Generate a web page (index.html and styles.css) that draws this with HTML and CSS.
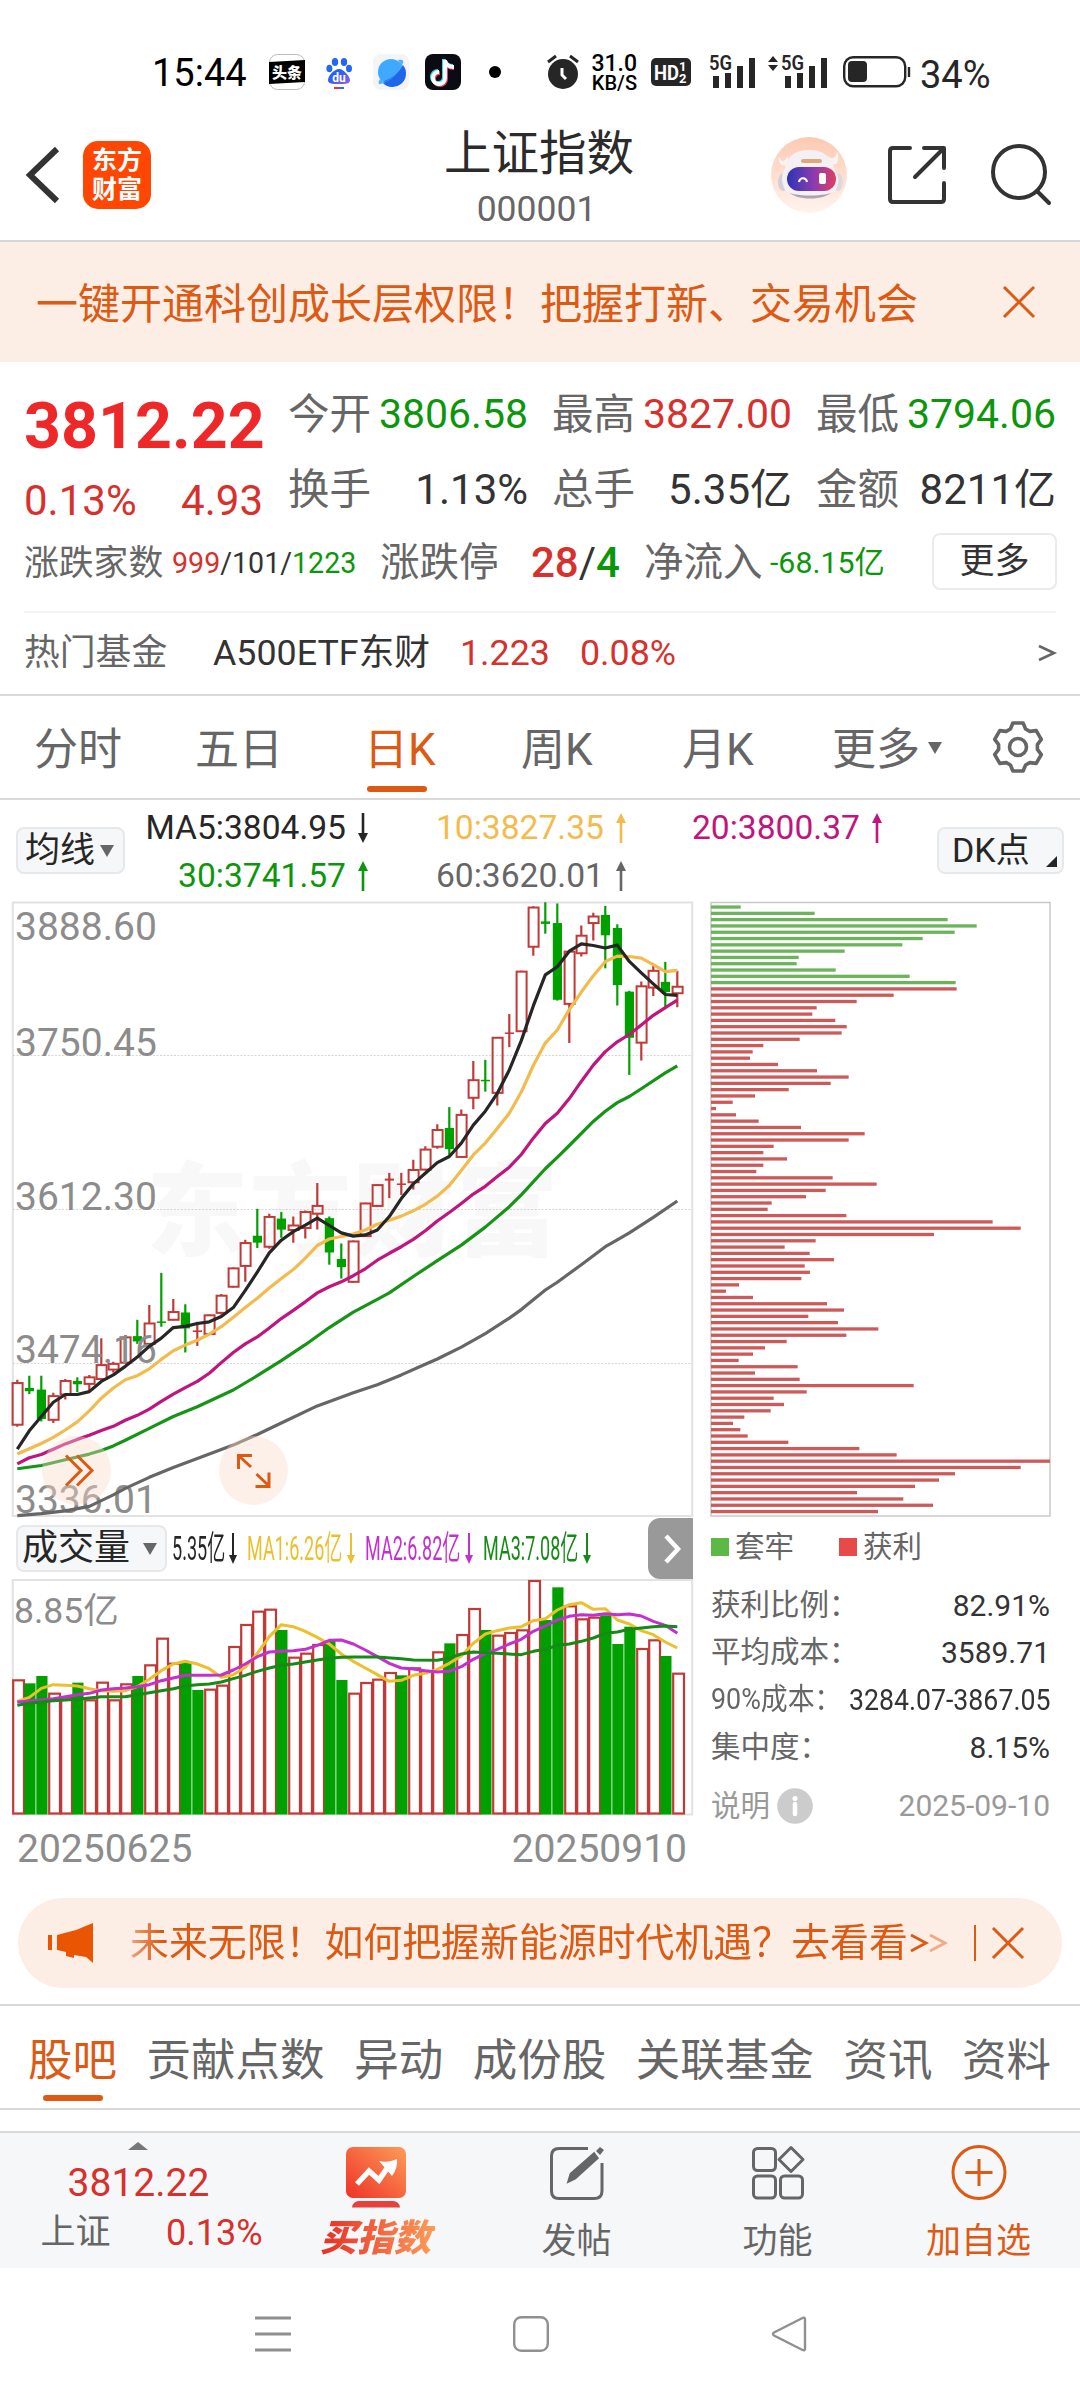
FILE: index.html
```html
<!DOCTYPE html>
<html lang="zh-CN">
<head>
    <meta charset="UTF-8">
    <meta name="viewport" content="width=device-width, initial-scale=1.0">
    <title>上证指数 000001</title>
    <link rel="stylesheet" href="styles.css">
</head>
<body>

    <div class="status">
        <span class="clock">15:44</span>
        <svg class="toutiao" width="36" height="36" viewBox="0 0 36 36">
            <rect x=".5" y=".5" width="35" height="35" rx="8" fill="#fff" stroke="#bbb"/>
            <path d="M0 8L36 6V28L0 30Z" fill="#000"/>
            <text x="18" y="23.5" text-anchor="middle" font-size="15" font-weight="900" fill="#fff">头条</text>
        </svg>
        <svg class="baidu" width="26" height="36" viewBox="0 0 26 36">
            <defs><linearGradient id="paw" x1="0" y1="0" x2="1" y2="1"><stop offset=".4" stop-color="#2a62f0"/><stop offset="1" stop-color="#a05be0"/></linearGradient></defs>
            <ellipse cx="9" cy="8" rx="3.2" ry="4" fill="#2468f2"/>
            <ellipse cx="18" cy="8" rx="3.2" ry="4" fill="#2468f2"/>
            <ellipse cx="3.4" cy="14.5" rx="3" ry="3.8" fill="#2468f2"/>
            <ellipse cx="23" cy="14.5" rx="3" ry="3.8" fill="#2468f2"/>
            <path d="M13 15C18 15 24 23 24 26C24 30 20 30 13 30C6 30 2 30 2 26C2 22 8 15 13 15Z" fill="url(#paw)"/>
            <text x="13" y="27.5" text-anchor="middle" font-size="12" font-weight="700" fill="#fff">du</text>
            <rect x="8" y="33" width="5" height="2" fill="#e33"/><rect x="13" y="33" width="5" height="2" fill="#36f"/>
        </svg>
        <svg class="planet" width="36" height="36" viewBox="0 0 36 36">
            <rect width="36" height="36" rx="8" fill="#f3f4f6"/>
            <circle cx="18" cy="18" r="13" fill="#3fa9ff"/>
            <path d="M30 11A13 13 0 0 1 9 28C18 25 26 19 30 11Z" fill="#1f66ea"/>
            <path d="M25 6C29 5 31 6 30 9C27 18 18 27 8 30C5 31 5 28 7 25L12 28C20 24 26 18 28 11Z" fill="#4db4ff"/>
        </svg>
        <svg class="tiktok" width="36" height="36" viewBox="0 0 36 36">
            <rect width="36" height="36" rx="8" fill="#0b0b14"/>
            <g fill="none" stroke-width="4">
                <path d="M19 5V23A6 6 0 1 1 13 17M19 6C20 10 23 12 28 12" stroke="#27e5e5"/>
                <path d="M21 7V25A6 6 0 1 1 15 19M21 8C22 12 25 14 29 14" stroke="#f23a5c"/>
                <path d="M20 6V24A6 6 0 1 1 14 18M20 7C21 11 24 13 29 13" stroke="#fff"/>
            </g>
        </svg>
        <span class="dot"></span>
        <svg class="alarm" width="32" height="36" viewBox="0 0 32 36">
            <circle cx="16" cy="20" r="15" fill="#262626"/>
            <path d="M1 8L9 2M23 2L31 8" stroke="#262626" stroke-width="3"/>
            <path d="M15 14V21L19 25" fill="none" stroke="#fff" stroke-width="3"/>
        </svg>
        <div class="speed"><b>31.0</b><span>KB/S</span></div>
        <svg class="hd" width="40" height="28" viewBox="0 0 40 28">
            <rect width="40" height="28" rx="5" fill="#262626"/>
            <text x="3" y="22" font-size="21" font-weight="700" fill="#fff" textLength="25" lengthAdjust="spacingAndGlyphs">HD</text>
            <text x="28" y="13" font-size="13" font-weight="700" fill="#fff">1</text>
            <text x="28" y="25" font-size="13" font-weight="700" fill="#fff">2</text>
        </svg>
        <svg class="signal" width="46" height="34" viewBox="0 0 46 34">
            <text x="-1" y="15" font-size="20" font-weight="600" fill="#262626" textLength="23" lengthAdjust="spacingAndGlyphs">5G</text>
            <path d="M6 21V33M18 18V33M30 11V33M42 3V33" stroke="#262626" stroke-width="6"/>
        </svg>
        <svg class="signal second" width="60" height="34" viewBox="0 0 60 34">
            <path d="M0 7L5 1L10 7ZM0 10L5 16L10 10Z" fill="#262626"/>
            <text x="13" y="15" font-size="20" font-weight="600" fill="#262626" textLength="23" lengthAdjust="spacingAndGlyphs">5G</text>
            <path d="M20 21V33M32 18V33M44 11V33M56 3V33" stroke="#262626" stroke-width="6"/>
        </svg>
        <svg class="battery" width="68" height="32" viewBox="0 0 68 32">
            <rect x="1.2" y="1.2" width="61" height="29" rx="9" fill="none" stroke="#262626" stroke-width="2.4"/>
            <rect x="5" y="5" width="19" height="21" rx="4" fill="#262626"/>
            <path d="M66 11V21" stroke="#262626" stroke-width="2.4"/>
        </svg>
        <span class="percent">34%</span>
    </div>

    <div class="header">
        <svg class="back" width="34" height="58" viewBox="0 0 34 58"><path d="M31 3L4 29L31 55" fill="none" stroke="#333" stroke-width="6"/></svg>
        <div class="brand"><span>东方</span><span>财富</span></div>
        <div class="title"><h1>上证指数</h1><p>000001</p></div>
        <svg class="robot" width="76" height="76" viewBox="0 0 76 76">
            <defs>
                <linearGradient id="halo" x1="0" y1="0" x2="0" y2="1"><stop offset="0" stop-color="#fdc9b2"/><stop offset="1" stop-color="#fff4ee"/></linearGradient>
                <linearGradient id="visor"><stop offset="0" stop-color="#2b35b4"/><stop offset=".55" stop-color="#8d3bb0"/><stop offset="1" stop-color="#e04060"/></linearGradient>
            </defs>
            <circle cx="38" cy="38" r="38" fill="url(#halo)"/>
            <path d="M8 19C10 26 14 25 17 19L17 29L11 28C8 26 7 22 8 19ZM66 15C64 23 60 22 57 19L59 28L65 27C68 24 68 18 66 15Z" fill="#f8f3f2"/>
            <ellipse cx="12" cy="45" rx="5" ry="9" fill="#d3cfd7"/><ellipse cx="67" cy="45" rx="5" ry="9" fill="#e0d8dd"/>
            <path d="M17 54C24 64 54 64 62 54Z" fill="#a9a5b3"/>
            <path d="M38 13C53 13 60 20 63 31C68 37 69 47 64 54C56 60 22 60 15 54C10 47 10 37 14 31C16 20 23 13 38 13Z" fill="#f4f0f3"/>
            <rect x="30" y="22" width="21" height="4" rx="2" fill="#dfa877"/>
            <rect x="16" y="30" width="49" height="24" rx="12" fill="url(#visor)"/>
            <path d="M28 45C29 40 35 40 36 45" fill="none" stroke="#fff" stroke-width="2.2"/>
            <rect x="48" y="36" width="7" height="11" rx="2" fill="#fff"/>
        </svg>
        <svg class="share" width="60" height="60" viewBox="0 0 60 60" fill="none" stroke="#333" stroke-width="4" stroke-linecap="round" stroke-linejoin="round">
            <path d="M23 3H6Q3 3 3 6V54Q3 57 6 57H54Q57 57 57 54V38M37 3H57V23M56 4L28 32"/>
        </svg>
        <svg class="search" width="62" height="62" viewBox="0 0 62 62" fill="none" stroke="#333" stroke-width="4" stroke-linecap="round">
            <circle cx="29" cy="28" r="26"/><path d="M47 47L59 59"/>
        </svg>
    </div>

    <div class="banner">
        <span>一键开通科创成长层权限！把握打新、交易机会</span>
        <svg width="34" height="34" viewBox="0 0 34 34"><path d="M2 2L32 32M32 2L2 32" stroke="#dc5a14" stroke-width="3"/></svg>
    </div>

    <div class="quote">
        <div class="price">
            <strong>3812.22</strong>
            <div class="change"><span>0.13%</span><span>4.93</span></div>
        </div>
        <div class="stats">
            <div class="stat"><label>今开</label><span class="down">3806.58</span></div>
            <div class="stat"><label>最高</label><span class="up">3827.00</span></div>
            <div class="stat"><label>最低</label><span class="down">3794.06</span></div>
            <div class="stat"><label>换手</label><span>1.13%</span></div>
            <div class="stat"><label>总手</label><span>5.35亿</span></div>
            <div class="stat"><label>金额</label><span>8211亿</span></div>
        </div>
    </div>
    <div class="breadth">
        <label class="families">涨跌家数</label>
        <span class="counts"><i class="up">999</i>/101/<i class="down">1223</i></span>
        <label>涨跌停</label>
        <span class="limits"><i class="up">28</i>/<i class="down">4</i></span>
        <label>净流入</label>
        <span class="inflow down">-68.15亿</span>
        <button class="more">更多</button>
    </div>
    <div class="fund">
        <label>热门基金</label>
        <span class="fund-name">A500ETF东财</span>
        <span class="fund-price up">1.223</span>
        <span class="fund-rate up">0.08%</span>
        <svg width="20" height="18" viewBox="0 0 20 18"><path d="M2 2L17 9L2 16" fill="none" stroke="#666" stroke-width="2.6"/></svg>
    </div>

    <div class="periods">
        <span>分时</span>
        <span>五日</span>
        <span class="active">日K</span>
        <span>周K</span>
        <span>月K</span>
        <span>更多<i class="caret"></i></span>
        <svg class="gear" width="54" height="54" viewBox="-27 -27 54 54" fill="none" stroke="#666" stroke-width="3.6" stroke-linejoin="round">
            <path d="M-7.6-18L-5.1-24H5.1L7.6-18L11.8-15.6L18.2-16.4L23.3-7.6L19.4-2.4V2.4L23.3 7.6L18.2 16.4L11.8 15.6L7.6 18L5.1 24H-5.1L-7.6 18L-11.8 15.6L-18.2 16.4L-23.3 7.6L-19.4 2.4V-2.4L-23.3-7.6L-18.2-16.4L-11.8-15.6Z"/>
            <circle r="8.5"/>
        </svg>
    </div>

    <div class="averages">
        <div class="chip ma-chip">均线<i class="caret"></i></div>
        <div class="ma-list">
            <span class="ma5">MA5:3804.95<svg width="10" height="30" viewBox="0 0 10 30"><path d="M5 0V26" stroke="currentColor" stroke-width="2.6"/><path d="M0 20L5 30L10 20Z" fill="currentColor"/></svg></span>
            <span class="ma10">10:3827.35<svg width="10" height="30" viewBox="0 0 10 30"><path d="M5 4V30" stroke="currentColor" stroke-width="2.6"/><path d="M0 10L5 0L10 10Z" fill="currentColor"/></svg></span>
            <span class="ma20">20:3800.37<svg width="10" height="30" viewBox="0 0 10 30"><path d="M5 4V30" stroke="currentColor" stroke-width="2.6"/><path d="M0 10L5 0L10 10Z" fill="currentColor"/></svg></span>
            <span class="ma30">30:3741.57<svg width="10" height="30" viewBox="0 0 10 30"><path d="M5 4V30" stroke="currentColor" stroke-width="2.6"/><path d="M0 10L5 0L10 10Z" fill="currentColor"/></svg></span>
            <span class="ma60">60:3620.01<svg width="10" height="30" viewBox="0 0 10 30"><path d="M5 4V30" stroke="currentColor" stroke-width="2.6"/><path d="M0 10L5 0L10 10Z" fill="currentColor"/></svg></span>
        </div>
        <div class="chip dk-chip">DK点<i class="corner"></i></div>
    </div>

    <div class="charts">
        <div class="chart-left">
            <svg id="kline" width="681" height="617" viewBox="0 0 681 617">
                <text class="watermark" x="134" y="347" textLength="412">东方财富</text>
                <rect x=".8" y="1.5" width="679.4" height="613.5" fill="none" stroke="#e2e2e2" stroke-width="2"/>
                <path d="M1 154.5H680M1 308.5H680M1 462.5H680" stroke="#d6d6d6" stroke-dasharray="2 1.5"/>
                <g id="candles"></g>
                <g class="axis">
                    <text x="3" y="39">3888.60</text>
                    <text x="3" y="154.5">3750.45</text>
                    <text x="3" y="308.5">3612.30</text>
                    <text x="3" y="462">3474.16</text>
                    <text x="3" y="611.5">3336.01</text>
                </g>
                <g id="klines"></g>
                <g fill="#fbd9c8" fill-opacity=".4"><circle cx="64.5" cy="569.5" r="34.5"/><circle cx="241.5" cy="569.5" r="34.5"/></g>
                <g fill="none" stroke="#dc5a14" stroke-width="3">
                    <path d="M54 554.5L69 569.5L54 584.5M65 554.5L80 569.5L65 584.5"/>
                    <path d="M226.5 568V554.5H240M227 555L239 566M244.5 573L256.5 584.5M243.5 585.5H257V571.5"/>
                </g>
            </svg>
            <div class="vol-head">
                <div class="chip vol-chip">成交量<i class="caret"></i></div>
                <div class="vol-list">
                    <div class="vol-now"><span>5.35亿</span><svg width="8" height="31" viewBox="0 0 8 31" fill="currentColor"><path d="M3 0H5V22H8L4 31L0 22H3Z"/></svg></div>
                    <div class="vol-ma1"><span>MA1:6.26亿</span><svg width="8" height="31" viewBox="0 0 8 31" fill="currentColor"><path d="M3 0H5V22H8L4 31L0 22H3Z"/></svg></div>
                    <div class="vol-ma2"><span>MA2:6.82亿</span><svg width="8" height="31" viewBox="0 0 8 31" fill="currentColor"><path d="M3 0H5V22H8L4 31L0 22H3Z"/></svg></div>
                    <div class="vol-ma3"><span>MA3:7.08亿</span><svg width="8" height="31" viewBox="0 0 8 31" fill="currentColor"><path d="M3 0H5V22H8L4 31L0 22H3Z"/></svg></div>
                </div>
                <div class="vol-next"><svg width="18" height="30" viewBox="0 0 18 30"><path d="M3 2L15 15L3 28" fill="none" stroke="#fff" stroke-width="4.5"/></svg></div>
            </div>
            <svg id="volume" width="681" height="237" viewBox="0 0 681 237">
                <rect x=".8" y="1" width="679.4" height="234.5" fill="none" stroke="#e2e2e2" stroke-width="2"/>
                <text class="vol-max" x="2" y="44">8.85亿</text>
                <g id="volbars"></g>
                <g id="vollines"></g>
            </svg>
            <div class="dates"><span>20250625</span><span>20250910</span></div>
        </div>
        <div class="chart-right">
            <svg id="profile" width="342" height="617" viewBox="0 0 342 617">
                <rect x="1" y="1.5" width="339" height="613.5" fill="none" stroke="#c9c9c9" stroke-width="1.5"/>
            </svg>
            <div class="legend"><i class="sq green"></i><span>套牢</span><i class="sq red"></i><span>获利</span></div>
            <div class="cost"><label>获利比例：</label><span>82.91%</span></div>
            <div class="cost"><label>平均成本：</label><span>3589.71</span></div>
            <div class="cost tight"><label>90%成本：</label><span>3284.07-3867.05</span></div>
            <div class="cost"><label>集中度：</label><span>8.15%</span></div>
            <div class="explain">
                <span>说明</span>
                <svg width="36" height="36" viewBox="0 0 36 36"><circle cx="18" cy="18" r="17.8" fill="#ccc"/><circle cx="18" cy="10.5" r="2.5" fill="#fff"/><path d="M18 16V26" stroke="#fff" stroke-width="4.5" stroke-linecap="round"/></svg>
                <span class="date">2025-09-10</span>
            </div>
        </div>
    </div>

    <div class="promo">
        <svg width="46" height="40" viewBox="0 0 46 40" fill="#ea5504"><path d="M0 12H4V27H0ZM9 12L28 7L45 0V40L38 34L26 32V35L18 33V29L9 27Z"/></svg>
        <span class="promo-text">未来无限！如何把握新能源时代机遇？去看看</span>
        <svg width="40" height="20" viewBox="0 0 40 20" fill="none" stroke="#dc5a14" stroke-width="2.8"><path d="M2 2L17 10L2 18"/><path d="M21 2L36 10L21 18" stroke-opacity=".45"/></svg>
        <i class="bar"></i>
        <svg width="34" height="34" viewBox="0 0 34 34"><path d="M2 2L32 32M32 2L2 32" stroke="#dc5a14" stroke-width="3"/></svg>
    </div>

    <div class="sections">
        <span class="active">股吧</span>
        <span>贡献点数</span>
        <span>异动</span>
        <span>成份股</span>
        <span>关联基金</span>
        <span>资讯</span>
        <span>资料</span>
    </div>

    <div class="toolbar">
        <div class="index">
            <i class="arrow-up"></i>
            <span class="up index-price">3812.22</span>
            <div class="index-line"><span>上证</span><span class="up">0.13%</span></div>
        </div>
        <div class="tool buy">
            <svg width="62" height="62" viewBox="0 0 62 62">
                <defs><linearGradient id="hot" x1="0" y1="1" x2="1" y2="0"><stop offset="0" stop-color="#ef3126"/><stop offset="1" stop-color="#fd9c59"/></linearGradient></defs>
                <rect x="1" y="1" width="60" height="51" rx="7" fill="url(#hot)"/>
                <path d="M7 61.5Q8 55 14 55H48Q54 55 55 61.5Z" fill="#e8403a"/>
                <path d="M12 38L24 25L34 34L45 18" fill="none" stroke="#fff" stroke-width="5.5"/><path d="M34 15Q44 17 52 13Q53 22 47 30Z" fill="#fff"/>
            </svg>
            <span>买指数</span>
        </div>
        <div class="tool">
            <svg width="62" height="62" viewBox="0 0 62 62" fill="none" stroke="#666" stroke-width="3"><path d="M42 2.5H13Q5.5 2.5 5.5 10V45Q5.5 52.5 13 52.5H48Q56 52.5 56 45V17"/><path d="M23 35L25 28L48 8L51 12L29 32Z" fill="#666"/><path d="M50 5L54 1L58 4L54 9Z" fill="#666" stroke="none"/></svg>
            <span>发帖</span>
        </div>
        <div class="tool">
            <svg width="62" height="62" viewBox="0 0 62 62" fill="none" stroke="#666" stroke-width="3"><rect x="6.5" y="2.5" width="22" height="22" rx="4"/><path d="M44 1.5L56 13.5L44 25.5L32 13.5Z" stroke-linejoin="round"/><rect x="6.5" y="30" width="22" height="22" rx="4"/><rect x="33.5" y="30" width="22" height="22" rx="4"/></svg>
            <span>功能</span>
        </div>
        <div class="tool add">
            <svg width="62" height="62" viewBox="0 0 62 62" fill="none" stroke="#dc5a14" stroke-width="3"><circle cx="31" cy="26.5" r="26"/><path d="M31 13V40M17.5 26.5H44.5"/></svg>
            <span>加自选</span>
        </div>
    </div>

    <div class="sysnav">
        <svg width="36" height="36" viewBox="0 0 36 36"><path d="M0 2H36M0 18H36M0 34H36" stroke="#909090" stroke-width="3"/></svg>
        <svg width="36" height="36" viewBox="0 0 36 36"><rect x="1.2" y="1.2" width="33.6" height="33.6" rx="7" fill="none" stroke="#909090" stroke-width="2.4"/></svg>
        <svg width="36" height="36" viewBox="0 0 36 36"><path d="M31.5 2L3 16.5Q1 18 3 19.5L31.5 34Q34 35 34 32.5V3.5Q34 1 31.5 2Z" fill="none" stroke="#909090" stroke-width="2.4"/></svg>
    </div>

    <script src="chart.js"></script>
</body>
</html>
```

FILE: styles.css
```css
* {
    box-sizing: border-box;
}

body {
    margin: 0;
    width: 1080px;
    background: #fff;
    color: #333;
    font-family: Roboto, "Noto Sans CJK SC", sans-serif;
    white-space: nowrap;
}

i {
    font-style: normal;
}

svg {
    display: block;
    flex: none;
    overflow: visible;
}

.up {
    color: #d7312e;
}

.down {
    color: #0c960c;
}

.caret {
    display: inline-block;
    border: 7.5px solid transparent;
    border-top: 12px solid #666;
    border-bottom: 0;
}

/* status bar */
.status {
    display: flex;
    align-items: center;
    height: 110px;
    padding: 34px 0 0 152px;
    color: #000;
}

.clock {
    width: 94px;
    margin-top: 2px;
    font-size: 38px;
    line-height: 40px;
}

.toutiao { margin-left: 23px; }
.baidu { margin-left: 21px; }
.planet { margin-left: 21px; }
.tiktok { margin-left: 16px; }

.dot {
    width: 12px;
    height: 12px;
    margin-left: 28px;
    border-radius: 50%;
    background: #000;
}

.alarm { margin-left: 46px; }

.speed {
    display: flex;
    flex-direction: column;
    align-items: flex-end;
    width: 47px;
    margin: 2px 0 0 11px;
    font-size: 20px;
    line-height: 18px;
    font-weight: 500;
}

.speed b {
    font-size: 23px;
    line-height: 20px;
    font-weight: 500;
}

.hd { margin-left: 14px; }
.signal { margin: 0 0 0 19px; }
.second { margin-left: 12px; }
.battery { margin-left: 15px; }

.percent {
    margin: 5px 0 0 9px;
    color: #262626;
    font-size: 38px;
    line-height: 40px;
}

/* header */
.header {
    display: flex;
    align-items: center;
    height: 132px;
    border-bottom: 2px solid #d6d6d6;
}

.back { margin-left: 26px; }

.brand {
    display: flex;
    flex-direction: column;
    align-items: center;
    justify-content: center;
    width: 68px;
    height: 68px;
    margin-left: 23px;
    border-radius: 15px;
    background: #ff4602;
    color: #fff;
    font-size: 25px;
    font-weight: 700;
    line-height: 29px;
}

.title {
    width: 240px;
    margin-left: 268px;
    padding-top: 9px;
    text-align: center;
}

.title h1 {
    margin: 0;
    color: #2b2b2b;
    font-size: 47.5px;
    font-weight: 400;
    line-height: 62px;
}

.title p {
    margin: -3px 5px 0 0;
    color: #666;
    font-size: 35.5px;
    line-height: 54px;
}

.robot { margin-left: 112px; }
.share { margin-left: 40px; }
.search { margin-left: 43px; }

/* notice */
.banner {
    display: flex;
    align-items: center;
    justify-content: space-between;
    height: 120px;
    padding: 0 44px 0 36px;
    background: #fceee5;
    color: #dc5a14;
    font-size: 42px;
    line-height: 60px;
}

.banner span { padding-top: 5px; }

/* quote */
.quote {
    display: flex;
    height: 171px;
    padding: 0 25px;
}

.price {
    width: 239px;
    margin-right: 24px;
    padding-top: 25px;
}

.price strong {
    display: block;
    margin-left: -1px;
    color: #ee2828;
    font-size: 64.5px;
    font-weight: 700;
    line-height: 78px;
}

.change {
    display: flex;
    justify-content: space-between;
    margin: 0 1px 0 -1px;
    color: #d7312e;
    font-size: 42px;
    line-height: 72px;
}

.stats {
    display: grid;
    grid-template-columns: repeat(3, 240px);
    grid-auto-rows: 75px;
    gap: 0 24px;
    padding-top: 15px;
}

.stat {
    display: flex;
    justify-content: space-between;
    font-size: 41px;
    line-height: 75px;
}

.stat label {
    color: #666;
    font-size: 41.5px;
}

.stat:nth-child(n+4) span {
    font-size: 42px;
}

.breadth {
    display: flex;
    align-items: center;
    height: 56px;
    padding: 0 23px 0 24px;
}

.breadth label,
.breadth span {
    padding-top: 4px;
    line-height: 58px;
}

.breadth label {
    width: 118px;
    color: #666;
    font-size: 39.5px;
}

.breadth .families {
    width: 139px;
    font-size: 34.8px;
}

.counts {
    width: 217px;
    padding-left: 9px;
    font-size: 28.6px;
}

.limits {
    width: 146px;
    padding-left: 33px;
    font-size: 42px;
}

.limits i {
    font-weight: 500;
}

.inflow {
    padding-left: 8px;
    font-size: 30.3px;
}

.more {
    width: 125px;
    height: 57px;
    margin: 0 0 0 auto;
    padding: 0;
    border: 2px solid #ebebeb;
    border-radius: 8px;
    background: #fff;
    color: #333;
    font: inherit;
    font-size: 35px;
    line-height: 54px;
}

.fund {
    display: flex;
    align-items: center;
    height: 107px;
    padding-top: 23px;
    padding-left: 24px;
    border-bottom: 2px solid #d9d9d9;
    background: linear-gradient(#f4f4f4, #f4f4f4) 24px 22px / 1032px 2px no-repeat;
    font-size: 35.8px;
    line-height: 81px;
}

.fund label {
    width: 189px;
    color: #666;
}

.fund-name { width: 247px; }
.fund-price { width: 120px; }
.fund-rate { width: 457px; }

/* period tabs */
.periods {
    display: flex;
    align-items: center;
    height: 104px;
    padding-left: 34px;
    border-bottom: 2px solid #d9d9d9;
    color: #666;
    font-size: 44px;
}

.periods span {
    width: 161px;
    padding-top: 5px;
    line-height: 104px;
}

.periods span:nth-child(2) { width: 169px; }
.periods span:nth-child(3) { width: 157px; }
.periods span:nth-child(5) { width: 150px; }

.periods .caret {
    margin: 0 0 11px 8px;
}

.active {
    position: relative;
    color: #dc5a14;
}

.active::after {
    content: "";
    position: absolute;
    left: 3px;
    bottom: 10px;
    width: 60px;
    height: 6px;
    border-radius: 3px;
    background: #dc5a14;
}

.gear { margin-left: -2px; }

/* moving averages */
.chip {
    display: flex;
    align-items: center;
    height: 47px;
    border: 2px solid #e6e8ea;
    border-radius: 8px;
    background: #f6f7f9;
    color: #262626;
    font-size: 35px;
    line-height: 43px;
}

.averages {
    display: flex;
    align-items: center;
    height: 101px;
    padding-left: 16px;
}

.ma-chip {
    width: 109px;
    padding-left: 7px;
}

.ma-chip .caret { margin-left: 5px; }

.ma-list {
    display: grid;
    grid-template-columns: 245px 256px 311px;
    width: 812px;
    padding-top: 2px;
    line-height: 48px;
    font-size: 33.6px;
}

.ma-list span {
    display: flex;
    align-items: center;
}

.ma5,
.ma30 {
    justify-content: flex-end;
}

.ma10,
.ma20,
.ma60 {
    margin-left: 66px;
}

.ma-list svg { margin: 0 2px 0 12px; }
.ma5 { color: #262626; }
.ma10 { color: #f3bb4e; }
.ma20 { color: #bf157d; }
.ma30 { color: #0c960c; }
.ma60 { color: #666; }

.dk-chip {
    position: relative;
    width: 127px;
    padding-left: 13px;
    font-size: 34px;
}

.corner {
    position: absolute;
    right: 5px;
    bottom: 5px;
    border-bottom: 11px solid #262626;
    border-left: 11px solid transparent;
}

/* charts */
.charts {
    display: flex;
    height: 979px;
}

.chart-left {
    width: 693px;
    padding-left: 12px;
}

.chart-right {
    width: 342px;
    margin-left: 17px;
}

.watermark {
    fill: #f8f8f8;
    font-size: 102px;
    font-weight: 900;
}

.axis text {
    fill: #8c8c8c;
    font-size: 39px;
}

.vol-max {
    fill: #8c8c8c;
    font-size: 35.5px;
}

.vol-head {
    display: flex;
    align-items: center;
    height: 61px;
}

.vol-chip {
    width: 151px;
    margin: 0 5px 0 4px;
    padding-left: 4px;
    font-size: 36px;
}

.vol-chip .caret { margin-left: 13px; }

.vol-list {
    display: flex;
    font-size: 34px;
    line-height: 61px;
}

.vol-list div {
    display: flex;
    align-items: center;
    width: 118px;
}

.vol-list .vol-now { width: 75px; }

/* narrow figures so that the four values fit on one line */
.vol-list span {
    width: 100px;
    transform: scaleX(.53);
    transform-origin: left;
}

.vol-list .vol-now span { width: 57px; }
.vol-now { color: #262626; }
.vol-ma1 { color: #ecc02c; }
.vol-ma2 { color: #c42fd0; }
.vol-ma3 { color: #168a16; }

.vol-next {
    display: flex;
    align-items: center;
    justify-content: center;
    width: 45px;
    height: 61px;
    margin-left: auto;
    padding-left: 3px;
    border-radius: 12px 0 0 12px;
    background: #999;
}

.dates {
    display: flex;
    justify-content: space-between;
    padding: 1px 6px 0 5px;
    color: #8c8c8c;
    font-size: 39px;
    line-height: 64px;
}

.legend {
    display: flex;
    align-items: center;
    height: 64px;
    padding-bottom: 6px;
    color: #666;
    font-size: 29.5px;
    line-height: 58px;
}

.sq {
    width: 18px;
    height: 18px;
    margin: 0 6px 0 1px;
}

.legend span { width: 103px; }
.green { background: #5cb946; }
.red { background: #e84a4a; }

.cost {
    display: flex;
    justify-content: space-between;
    padding: 0 2px 0 1px;
    font-size: 30px;
    line-height: 47.2px;
}

.cost label {
    color: #666;
    font-size: 29.5px;
}

.tight label {
    margin-right: -40px;
    transform: scaleX(.91);
    transform-origin: left;
}

.tight span {
    transform: scaleX(.89);
    transform-origin: right;
}

.explain {
    display: flex;
    align-items: center;
    height: 70px;
    padding: 0 2px 0 1px;
    color: #999;
    font-size: 29.5px;
    line-height: 70px;
}

.explain svg { margin-left: 7px; }

.date {
    margin-left: auto;
    font-size: 30px;
}

/* promo */
.promo {
    display: flex;
    align-items: center;
    width: 1044px;
    height: 90px;
    margin: 18px 18px 16px;
    padding-left: 30px;
    border-radius: 45px;
    background: #fceee5;
    color: #dc5a14;
}

.promo-text {
    width: 779px;
    margin-left: 36px;
    font-size: 38.9px;
    line-height: 92px;
    -webkit-mask-image: linear-gradient(90deg, rgba(0, 0, 0, .5), #000 4%);
    mask-image: linear-gradient(90deg, rgba(0, 0, 0, .5), #000 4%);
}

.bar {
    width: 2px;
    height: 36px;
    margin: 0 15px 0 25px;
    background: #dc5a14;
}

/* section tabs */
.sections {
    display: flex;
    justify-content: space-between;
    height: 106px;
    padding: 0 29px 0 28px;
    border-top: 2px solid #d9d9d9;
    border-bottom: 2px solid #d9d9d9;
    color: #666;
    font-size: 44.5px;
    line-height: 110px;
}

.sections .active::after {
    left: 15px;
    bottom: 7px;
}

/* toolbar */
.toolbar {
    display: flex;
    height: 137px;
    margin-top: 21px;
    border-top: 2px solid #d9d9d9;
    background: #f6f7f9;
    color: #666;
    font-size: 35px;
}

.index {
    display: flex;
    flex-direction: column;
    align-items: center;
    width: 275px;
    padding-top: 9px;
}

.arrow-up {
    border: 10px solid transparent;
    border-top: 0;
    border-bottom: 8px solid #777;
}

.index-price {
    margin: 8px 0 0 2px;
    font-size: 39px;
    line-height: 50px;
}

.index-line {
    display: flex;
    justify-content: space-between;
    width: 222px;
    margin-left: 28px;
    line-height: 50px;
}

.index-line .up { font-size: 36px; }

.tool {
    display: flex;
    flex-direction: column;
    align-items: center;
    width: 201px;
    padding-top: 13px;
    line-height: 65px;
}

.tool svg { margin-bottom: 1px; }
.add { color: #dc5a14; }

.buy span {
    padding: 0 4px;
    background: linear-gradient(90deg, #e8352a 10%, #fd9c59);
    -webkit-background-clip: text;
    background-clip: text;
    color: transparent;
    font-size: 37px;
    font-style: italic;
    font-weight: 900;
    line-height: 60px;
}

/* system navigation */
.sysnav {
    display: flex;
    gap: 222px;
    padding: 48px 0 0 255px;
}
```

FILE: chart.js
```js
const NS = 'http://www.w3.org/2000/svg';
const RED = '#c03a37';
const GREEN = '#00a000';

function add(parent, name, attrs) {
    const el = document.createElementNS(NS, name);
    for (const key in attrs) el.setAttribute(key, attrs[key]);
    document.getElementById(parent).appendChild(el);
}

// color, open/close top and bottom, high, low
const candles = [
    ['r', 1208, 1310, 1200, 1315], ['g', 1220, 1228, 1190, 1235], ['g', 1224, 1296, 1190, 1302], ['r', 1240, 1298, 1232, 1306],
    ['r', 1203, 1236, 1198, 1248], ['g', 1203, 1211, 1194, 1230], ['r', 1194, 1210, 1188, 1228], ['r', 1164, 1198, 1098, 1200],
    ['r', 1161, 1175, 1156, 1182], ['r', 1096, 1158, 1090, 1160], ['g', 1093, 1106, 1053, 1112], ['r', 1062, 1112, 1017, 1118],
    ['g', 1057, 1060, 938, 1070], ['r', 1034, 1053, 1002, 1055], ['g', 1035, 1074, 1015, 1133], ['r', 1079, 1083, 1058, 1117],
    ['r', 1042, 1088, 1040, 1090], ['r', 994, 1036, 990, 1040], ['r', 927, 972, 925, 974], ['r', 865, 921, 857, 960],
    ['g', 847, 864, 781, 877], ['r', 801, 874, 793, 879], ['g', 805, 832, 789, 852], ['r', 822, 833, 800, 864],
    ['r', 789, 828, 785, 854], ['r', 774, 793, 718, 832], ['g', 804, 888, 800, 918], ['g', 904, 924, 866, 952],
    ['r', 861, 960, 859, 962], ['r', 768, 848, 766, 850], ['r', 723, 774, 721, 776], ['r', 707, 712, 693, 755],
    ['r', 719, 722, 693, 747], ['r', 686, 716, 661, 734], ['r', 636, 685, 628, 687], ['r', 588, 629, 574, 634],
    ['g', 583, 635, 532, 650], ['r', 551, 654, 538, 656], ['r', 466, 509, 419, 537], ['g', 465, 468, 416, 494],
    ['r', 362, 497, 360, 528], ['r', 349, 352, 304, 385], ['r', 200, 346, 198, 348], ['r', 43, 139, 40, 161],
    ['g', 77, 83, 30, 107], ['g', 81, 269, 33, 271], ['r', 151, 279, 149, 375], ['r', 112, 155, 87, 163],
    ['r', 65, 81, 56, 124], ['g', 61, 111, 39, 192], ['g', 93, 233, 84, 283], ['g', 249, 362, 247, 453],
    ['r', 236, 374, 224, 418], ['r', 198, 239, 184, 260], ['g', 225, 250, 176, 292], ['r', 237, 253, 198, 287]
];

const x = i => 5.3 + i * 12;
const y = v => v / 2.45 - 11;

candles.forEach(([c, top, bottom, high, low], i) => {
    const color = c === 'r' ? RED : GREEN;
    const h = (bottom - top) / 2.45;
    if (c === 'g' || h < 3) {
        add('candles', 'path', { d: `M${x(i)} ${y(high)}V${y(low)}`, stroke: color, 'stroke-width': 2.2 });
        add('candles', 'rect', { x: x(i) - 4.5, y: y(top), width: 9.2, height: Math.max(h, 1.5), fill: color });
    } else {
        add('candles', 'path', { d: `M${x(i)} ${y(high)}V${y(top)}M${x(i)} ${y(bottom)}V${y(low)}`, stroke: color, 'stroke-width': 2.2 });
        add('candles', 'rect', { x: x(i) - 4.7, y: y(top), width: 10, height: h, fill: 'none', stroke: color, 'stroke-width': 2 });
    }
});

// [index, value] pairs or plain values
function line(parent, data, fx, fy, color, width) {
    const points = data.map((p, i) => Array.isArray(p) ? `${fx(p[0])},${fy(p[1])}` : `${fx(i)},${fy(p)}`);
    add(parent, 'polyline', { points: points.join(' '), fill: 'none', stroke: color, 'stroke-width': width, 'stroke-linejoin': 'round' });
}

const ma60 = [[0, 1533], [2, 1528], [4, 1521], [6, 1510], [8, 1482], [9, 1466], [11, 1439], [13, 1415], [16, 1382], [18, 1360], [20, 1334], [22, 1306], [25, 1264], [28, 1232], [30, 1212], [32, 1188], [34, 1162], [35, 1149], [37, 1120], [39, 1087], [41, 1049], [42, 1028], [44, 980], [45, 961], [47, 918], [49, 874], [50, 857], [51, 840], [53, 802], [55, 762]];
const ma30 = [[0, 1418], [2, 1410], [4, 1396], [6, 1382], [7, 1373], [8, 1362], [9, 1348], [11, 1319], [13, 1290], [15, 1266], [18, 1225], [20, 1190], [22, 1153], [24, 1114], [26, 1072], [28, 1034], [30, 1003], [31, 987], [33, 947], [35, 908], [37, 870], [39, 826], [41, 776], [42, 747], [44, 683], [45, 655], [46, 626], [48, 567], [49, 542], [50, 521], [51, 506], [52, 487], [54, 448], [55, 431]];
const ma20 = [1406, 1391, 1383, 1370, 1357, 1346, 1336, 1324, 1314, 1299, 1287, 1272, 1253, 1235, 1219, 1204, 1184, 1158, 1133, 1112, 1095, 1073, 1050, 1030, 1009, 987, 972, 960, 945, 928, 907, 890, 874, 856, 835, 811, 790, 768, 745, 726, 702, 679, 648, 608, 572, 547, 511, 469, 429, 396, 372, 354, 331, 307, 288, 270];
const ma10 = [1382, 1369, 1356, 1341, 1323, 1303, 1276, 1245, 1220, 1200, 1190, 1173, 1150, 1129, 1115, 1103, 1088, 1070, 1047, 1023, 1000, 975, 952, 930, 902, 871, 855, 849, 843, 833, 819, 809, 799, 786, 770, 750, 724, 687, 649, 620, 584, 547, 495, 430, 375, 343, 293, 250, 210, 175, 162, 163, 167, 183, 200, 197];
const ma5 = [1370, 1325, 1290, 1255, 1236, 1236, 1229, 1204, 1188, 1167, 1144, 1118, 1098, 1072, 1069, 1062, 1058, 1045, 1023, 981, 936, 889, 858, 837, 821, 804, 822, 840, 848, 845, 833, 800, 756, 720, 694, 668, 653, 620, 576, 542, 498, 441, 369, 284, 208, 188, 150, 132, 136, 142, 135, 175, 203, 230, 256, 258];

line('klines', ma60, x, y, '#666', 3.2);
line('klines', ma30, x, y, '#159415', 3.2);
line('klines', ma20, x, y, '#bf157d', 3.2);
line('klines', ma10, x, y, '#f3bb4e', 3.2);
line('klines', ma5, x, y, '#262626', 3.2);

// volume
const volumes = [508, 520, 498, 548, 560, 518, 568, 515, 568, 520, 498, 463, 383, 458, 458, 540, 536, 524, 408, 342, 302, 296, 360, 440, 428, 402, 393, 510, 548, 516, 506, 486, 496, 472, 482, 424, 400, 372, 294, 360, 374, 366, 358, 210, 330, 232, 286, 325, 320, 316, 402, 350, 414, 388, 438, 488];
const falling = [1, 2, 5, 10, 14, 15, 22, 26, 27, 32, 36, 39, 44, 45, 49, 50, 51, 54];
const vy = v => v / 3 - 69;
volumes.forEach((v, i) => {
    const left = i * 12 + .6;
    if (falling.includes(i)) {
        add('volbars', 'rect', { x: left - .3, y: vy(v), width: 11.2, height: 235.5 - vy(v), fill: GREEN });
    } else {
        add('volbars', 'rect', { x: left + .6, y: vy(v) + 1, width: 10.8, height: 233.5 - vy(v), fill: '#fff', stroke: RED, 'stroke-width': 2.2 });
    }
});
const vma3 = [[0, 586], [1, 580], [2, 576], [3, 572], [5, 568], [7, 560], [9, 560], [10, 554], [11, 548], [12, 542], [13, 536], [14, 528], [15, 524], [16, 522], [17, 516], [18, 506], [19, 496], [20, 484], [21, 474], [22, 466], [23, 462], [24, 456], [25, 450], [26, 445], [27, 442], [28, 441], [30, 441], [32, 446], [33, 450], [35, 451], [36, 444], [37, 432], [38, 426], [39, 428], [40, 430], [42, 434], [43, 424], [44, 418], [45, 406], [46, 402], [47, 394], [48, 384], [49, 370], [50, 366], [51, 358], [52, 354], [53, 350], [54, 348], [55, 350]];
const vma2 = [576, 573, 570, 566, 560, 554, 550, 540, 536, 534, 530, 524, 512, 504, 496, 496, 496, 495, 480, 462, 440, 426, 424, 422, 418, 406, 391, 390, 402, 420, 440, 460, 474, 477, 482, 486, 484, 470, 448, 430, 418, 402, 388, 364, 348, 330, 319, 314, 316, 311, 314, 312, 318, 334, 346, 370];
const vma1 = [574, 562, 535, 524, 526, 528, 536, 542, 544, 542, 530, 508, 482, 462, 454, 462, 476, 502, 494, 472, 430, 380, 344, 350, 364, 382, 402, 432, 454, 474, 494, 514, 511, 496, 490, 478, 460, 438, 400, 372, 362, 354, 350, 332, 326, 300, 284, 278, 298, 296, 330, 342, 362, 374, 396, 414];
line('vollines', vma1, x, vy, '#ecc02c', 3);
line('vollines', vma2, x, vy, '#c42fd0', 3);
line('vollines', vma3, x, vy, '#168a16', 3);

// cost distribution, first 13 rows are above the current price
const costs = [137, 359, 758, 845, 779, 683, 622, 449, 311, 305, 422, 644, 782,
    785, 596, 485, 365, 352, 421, 455, 440, 314, 205, 173, 165, 249, 366, 461, 407, 281, 180, 113, 63,
    123, 191, 318, 509, 461, 236, 205, 276, 205, 184, 413, 545, 392, 333, 230, 218, 454, 893, 977, 717,
    362, 269, 344, 417, 329, 345, 319, 132, 93, 174, 396, 447, 340, 429, 550, 454, 275, 210, 174, 131,
    308, 180, 314, 656, 335, 236, 267, 227, 148, 114, 136, 158, 280, 493, 605, 1065, 977, 780, 732, 660,
    486, 625, 714, 549];
costs.forEach((v, i) => {
    add('profile', 'rect', { x: 1, y: 4.4 + i * 6.297, width: (v - 48) / 3, height: 3.3, fill: i < 13 ? '#6cb45a' : '#cd5a58' });
});
```
